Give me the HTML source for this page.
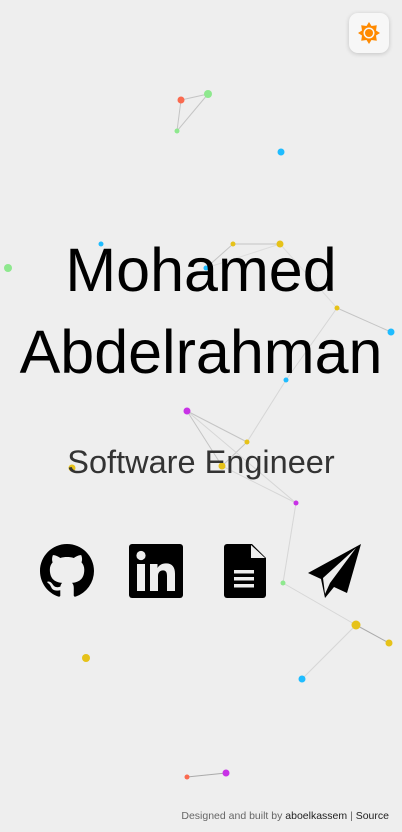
<!DOCTYPE html>
<html><head><meta charset="utf-8"><style>
html,body{margin:0;padding:0;width:402px;height:832px;overflow:hidden;background:#eeeeee;font-family:"Liberation Sans",sans-serif;}
svg.bg{position:absolute;left:0;top:0}
.btn{position:absolute;left:349px;top:13px;width:40px;height:40px;background:#f7f7f7;border-radius:9px;box-shadow:0 1px 5px rgba(0,0,0,.18);}
h1{position:absolute;left:0;width:402px;top:229px;margin:0;text-align:center;font-weight:normal;font-size:61px;line-height:82px;color:#000;}
.sub{position:absolute;left:0;width:402px;top:444px;text-align:center;font-size:32.5px;color:#333;}
.ic{position:absolute;top:544px}
.foot{position:absolute;right:13px;top:810px;font-size:10.5px;color:#666}
.foot b{font-weight:normal;color:#222}
</style></head><body>
<svg class="bg" width="402" height="832">
<g stroke="#c4c4c4" stroke-width="1">
<line x1="181" y1="100" x2="208" y2="94"/><line x1="181" y1="100" x2="177" y2="131"/><line x1="208" y1="94" x2="177" y2="131"/>
<line x1="233" y1="244" x2="280" y2="244"/><line x1="233" y1="244" x2="206" y2="268"/><line x1="280" y1="244" x2="206" y2="268" stroke="#ddd"/>
<line x1="280" y1="244" x2="337" y2="308" stroke="#ddd"/><line x1="337" y1="308" x2="391" y2="332"/><line x1="337" y1="308" x2="286" y2="380" stroke="#d6d6d6"/>
<line x1="286" y1="380" x2="247" y2="442" stroke="#d6d6d6"/><line x1="187" y1="411" x2="247" y2="442"/><line x1="187" y1="411" x2="222" y2="466"/>
<line x1="247" y1="442" x2="222" y2="466"/><line x1="222" y1="466" x2="296" y2="503" stroke="#d6d6d6"/><line x1="187" y1="411" x2="296" y2="503" stroke="#d6d6d6"/>
<line x1="296" y1="503" x2="283" y2="583" stroke="#d6d6d6"/><line x1="283" y1="583" x2="356" y2="625" stroke="#d6d6d6"/><line x1="356" y1="625" x2="389" y2="643" stroke="#aaa"/>
<line x1="356" y1="625" x2="302" y2="679" stroke="#d6d6d6"/><line x1="187" y1="777" x2="226" y2="773" stroke="#aaa"/>
</g>
<g>
<circle cx="181" cy="100" r="3.5" fill="#fa6a4f"/><circle cx="208" cy="94" r="4" fill="#8ee88e"/><circle cx="177" cy="131" r="2.5" fill="#8ee88e"/>
<circle cx="281" cy="152" r="3.5" fill="#1fbcff"/><circle cx="101" cy="244" r="2.5" fill="#1fbcff"/><circle cx="8" cy="268" r="4" fill="#8ee88e"/>
<circle cx="233" cy="244" r="2.5" fill="#e6c219"/><circle cx="280" cy="244" r="3.5" fill="#e6c219"/><circle cx="206" cy="268" r="2.5" fill="#1fbcff"/>
<circle cx="337" cy="308" r="2.5" fill="#e6c219"/><circle cx="391" cy="332" r="3.5" fill="#1fbcff"/><circle cx="286" cy="380" r="2.5" fill="#1fbcff"/>
<circle cx="187" cy="411" r="3.5" fill="#c832e6"/><circle cx="247" cy="442" r="2.5" fill="#e6c219"/><circle cx="222" cy="466" r="3.5" fill="#e6c219"/>
<circle cx="72" cy="468" r="3.5" fill="#e6c219"/><circle cx="296" cy="503" r="2.5" fill="#c832e6"/><circle cx="283" cy="583" r="2.5" fill="#8ee88e"/>
<circle cx="356" cy="625" r="4.5" fill="#e6c219"/><circle cx="389" cy="643" r="3.5" fill="#e6c219"/><circle cx="302" cy="679" r="3.5" fill="#1fbcff"/>
<circle cx="86" cy="658" r="4" fill="#e6c219"/><circle cx="187" cy="777" r="2.5" fill="#fa6a4f"/><circle cx="226" cy="773" r="3.5" fill="#c832e6"/>
</g>
</svg>
<div class="btn"><svg width="40" height="40" viewBox="0 0 40 40"><g fill="#ff8a00"><polygon points="20,9 22.5,13 27.8,12.2 27,17.5 31,20 27,22.5 27.8,27.8 22.5,27 20,31 17.5,27 12.2,27.8 13,22.5 9,20 13,17.5 12.2,12.2 17.5,13"/></g><circle cx="20" cy="20" r="5.5" fill="#f7f7f7"/><circle cx="20" cy="20" r="4" fill="#ff8a00"/></svg></div>
<h1>Mohamed<br>Abdelrahman</h1>
<div class="sub">Software Engineer</div>
<svg class="ic" style="left:40px" width="54" height="54" viewBox="0 0 16 16"><path fill="#000" d="M8 0C3.58 0 0 3.58 0 8c0 3.540 2.29 6.53 5.47 7.59.4.07.55-.17.55-.38 0-.19-.01-.82-.01-1.490-2.01.37-2.530-.49-2.690-.94-.09-.23-.48-.94-.82-1.130-.28-.15-.68-.52-.01-.53.63-.01 1.080.58 1.230.82.72 1.210 1.870.87 2.330.66.07-.52.28-.87.51-1.070-1.780-.2-3.640-.89-3.640-3.950 0-.87.31-1.590.82-2.150-.08-.2-.36-1.020.08-2.120 0 0 .67-.21 2.200.82.64-.18 1.320-.27 2-.27.68 0 1.360.09 2 .27 1.530-1.040 2.200-.82 2.200-.82.44 1.100.16 1.920.08 2.120.51.56.82 1.270.82 2.150 0 3.070-1.870 3.750-3.650 3.950.29.25.54.73.54 1.480 0 1.070-.01 1.930-.01 2.200 0 .21.15.46.55.38A8.013 8.013 0 0016 8c0-4.420-3.580-8-8-8z"/></svg>
<svg class="ic" style="left:129px" width="54" height="54" viewBox="0 0 54 54"><rect width="54" height="54" rx="3" fill="#000"/><rect x="8" y="20" width="8" height="27" fill="#eee"/><circle cx="12" cy="11.5" r="4.6" fill="#eee"/><path fill="#eee" d="M21 20h7.5v4c1.5-2.6 4.2-4.6 8.5-4.6 6.5 0 9 4 9 10.5V47h-8V32c0-3.5-1-5.6-4-5.600s-5 2.2-5 5.6v15h-8z"/></svg>
<svg class="ic" style="left:224px" width="42" height="54" viewBox="0 0 42 54"><path fill="#000" d="M3 0h25l14 14v37a3 3 0 01-3 3H3a3 3 0 01-3-3V3a3 3 0 013-3z"/><path fill="#eee" d="M27 1v13h14z"/><rect x="10" y="26" width="20" height="3.5" fill="#eee"/><rect x="10" y="33" width="20" height="3.5" fill="#eee"/><rect x="10" y="40" width="20" height="3.5" fill="#eee"/></svg>
<svg class="ic" style="left:306px" width="56" height="54" viewBox="0 0 56 54"><path fill="#000" d="M55 0L2 29l13 6 4 19 9-11 13 6z M17 34l33-30-26 35-5 11z"/><path fill="#eee" d="M18 35l30-29-24 32z"/></svg>
<div class="foot">Designed and built by <b>aboelkassem</b> | <b>Source</b></div>
</body></html>
